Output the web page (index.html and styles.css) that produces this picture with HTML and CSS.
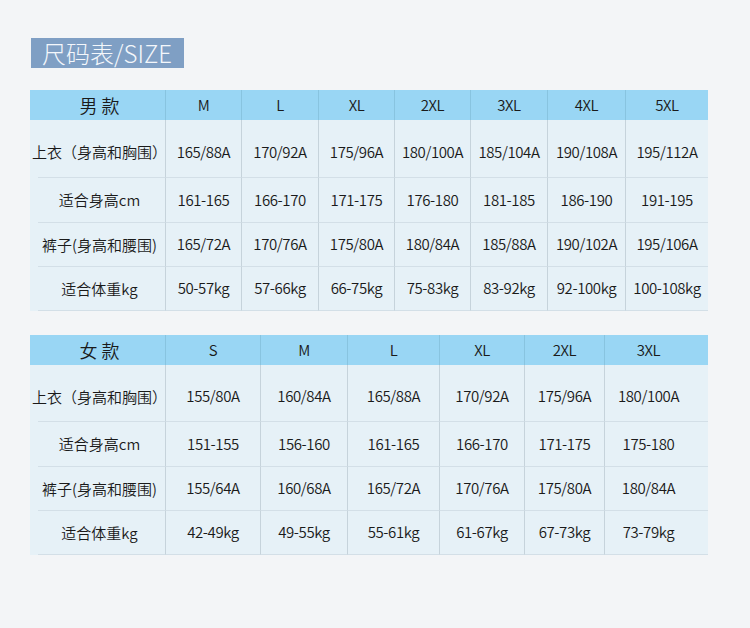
FILE: index.html
```html
<!DOCTYPE html>
<html lang="zh">
<head>
<meta charset="utf-8">
<title>尺码表</title>
<link rel="stylesheet" href="styles.css">
</head>
<body>
<div class="page">
  <div class="title">尺码表/SIZE</div>

  <div class="tbl men">
    <div class="cell hd first big">男 款</div>
    <div class="cell hd">M</div>
    <div class="cell hd">L</div>
    <div class="cell hd">XL</div>
    <div class="cell hd">2XL</div>
    <div class="cell hd">3XL</div>
    <div class="cell hd">4XL</div>
    <div class="cell hd">5XL</div>

    <div class="cell r1 first">上衣（身高和胸围）</div>
    <div class="cell r1">165/88A</div>
    <div class="cell r1">170/92A</div>
    <div class="cell r1">175/96A</div>
    <div class="cell r1">180/100A</div>
    <div class="cell r1">185/104A</div>
    <div class="cell r1">190/108A</div>
    <div class="cell r1">195/112A</div>

    <div class="cell first">适合身高cm</div>
    <div class="cell">161-165</div>
    <div class="cell">166-170</div>
    <div class="cell">171-175</div>
    <div class="cell">176-180</div>
    <div class="cell">181-185</div>
    <div class="cell">186-190</div>
    <div class="cell">191-195</div>

    <div class="cell first">裤子(身高和腰围)</div>
    <div class="cell">165/72A</div>
    <div class="cell">170/76A</div>
    <div class="cell">175/80A</div>
    <div class="cell">180/84A</div>
    <div class="cell">185/88A</div>
    <div class="cell">190/102A</div>
    <div class="cell">195/106A</div>

    <div class="cell first">适合体重kg</div>
    <div class="cell">50-57kg</div>
    <div class="cell">57-66kg</div>
    <div class="cell">66-75kg</div>
    <div class="cell">75-83kg</div>
    <div class="cell">83-92kg</div>
    <div class="cell">92-100kg</div>
    <div class="cell">100-108kg</div>
  </div>

  <div class="tbl women">
    <div class="cell hd first big">女 款</div>
    <div class="cell hd">S</div>
    <div class="cell hd">M</div>
    <div class="cell hd">L</div>
    <div class="cell hd">XL</div>
    <div class="cell hd">2XL</div>
    <div class="cell hd last">3XL</div>

    <div class="cell r1 first">上衣（身高和胸围）</div>
    <div class="cell r1">155/80A</div>
    <div class="cell r1">160/84A</div>
    <div class="cell r1">165/88A</div>
    <div class="cell r1">170/92A</div>
    <div class="cell r1">175/96A</div>
    <div class="cell r1 last">180/100A</div>

    <div class="cell first">适合身高cm</div>
    <div class="cell">151-155</div>
    <div class="cell">156-160</div>
    <div class="cell">161-165</div>
    <div class="cell">166-170</div>
    <div class="cell">171-175</div>
    <div class="cell last">175-180</div>

    <div class="cell first">裤子(身高和腰围)</div>
    <div class="cell">155/64A</div>
    <div class="cell">160/68A</div>
    <div class="cell">165/72A</div>
    <div class="cell">170/76A</div>
    <div class="cell">175/80A</div>
    <div class="cell last">180/84A</div>

    <div class="cell first">适合体重kg</div>
    <div class="cell">42-49kg</div>
    <div class="cell">49-55kg</div>
    <div class="cell">55-61kg</div>
    <div class="cell">61-67kg</div>
    <div class="cell">67-73kg</div>
    <div class="cell last">73-79kg</div>
  </div>
</div>
</body>
</html>
```

FILE: styles.css
```css
html, body {
  margin: 0;
  padding: 0;
  background: #f3f5f7;
}

body {
  font-family: "Noto Sans CJK SC", "Noto Sans", sans-serif;
  font-weight: 350;
  color: #1a1a1a;
}

.page {
  width: 750px;
  height: 628px;
  padding: 38px 0 0 30px;
  box-sizing: border-box;
}

.title {
  margin-left: 1px;
  display: inline-flex;
  align-items: center;
  height: 30px;
  padding: 0 12px 0 11px;
  background: #7f9fc4;
  color: #f4f7fb;
  font-size: 24px;
  font-weight: 300;
  line-height: 30px;
}

.tbl {
  display: grid;
  width: 678px;
  background: #e6f1f7;
  font-size: 15px;
}

.men {
  margin-top: 22px;
  grid-template-columns: 135px 76px 77px 76px 76px 77px 78px 83px;
  grid-template-rows: 30px 58px 45px 44px 44px;
}

.women {
  margin-top: 24px;
  grid-template-columns: 135px 95px 87px 92px 85px 80px 104px;
  grid-template-rows: 30px 57px 45px 44px 44px;
}

.cell {
  display: flex;
  align-items: center;
  justify-content: center;
  white-space: nowrap;
  border-left: 1px solid #c6d3db;
  border-bottom: 1px solid #d3dfe7;
  box-sizing: border-box;
  letter-spacing: -0.4px;
  padding-bottom: 2px;
}

.cell.first {
  border-left: 0;
  border-bottom: 0;
  padding-left: 4px;
  letter-spacing: 0;
  background: linear-gradient(#d3dfe7, #d3dfe7) no-repeat 8px 100% / calc(100% - 8px) 1px;
}

.cell.hd {
  background: #99d6f4;
  border-bottom: 0;
  border-left-color: #88c4e0;
  padding-bottom: 1px;
}

.cell.hd.first {
  background: #99d6f4;
}

.cell.big {
  font-size: 18px;
  letter-spacing: 0;
}

.cell.r1 {
  padding-top: 7px;
}

.women .cell.last {
  padding-right: 16px;
}
```
